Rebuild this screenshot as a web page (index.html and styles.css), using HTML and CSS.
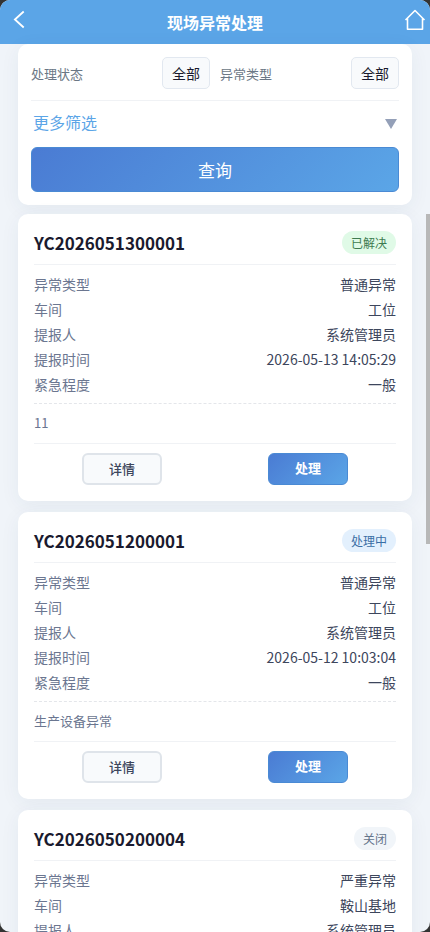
FILE: index.html
```html
<!DOCTYPE html>
<html lang="zh-CN">
<head>
<meta charset="utf-8">
<meta name="viewport" content="width=device-width, initial-scale=1">
<title>现场异常处理</title>
<link rel="stylesheet" href="styles.css">
</head>
<body>
<div class="app">
  <header class="navbar">
    <button class="nav-btn" type="button" aria-label="返回">
      <svg width="24" height="24" viewBox="0 0 24 24" fill="none" stroke="#fff" stroke-width="1.800"><path d="M16.700 3.500L7.900 11.500L16.700 19.500"/></svg>
    </button>
    <h1 class="navbar-title">现场异常处理</h1>
    <a class="nav-btn nav-home" href="#" aria-label="首页">
      <svg width="24" height="24" viewBox="0 0 24 24" fill="none" stroke="#fff" stroke-width="1.600" stroke-linejoin="round"><path d="M2.500 12L12 2.500L21.500 12M4.500 10.200V21.300H19.500V10.200"/></svg>
    </a>
  </header>

  <form class="filter">
    <div class="filter-row">
      <div class="field">
        <label for="status">处理状态</label>
        <select id="status"><option>全部</option></select>
      </div>
      <div class="field">
        <label for="type">异常类型</label>
        <select id="type"><option>全部</option></select>
      </div>
    </div>
    <button class="more" type="button">
      <span>更多筛选</span>
      <svg width="12" height="10" viewBox="0 0 12 10"><path d="M0 0H12L6 10Z" fill="#94a0b8"/></svg>
    </button>
    <button class="search" type="button">查询</button>
  </form>

  <main class="list">
    <div class="thumb"></div>
    <article class="card">
      <header class="card-head">
        <h2>YC2026051300001</h2>
        <span class="badge badge-done">已解决</span>
      </header>
      <dl class="info">
        <div><dt>异常类型</dt><dd>普通异常</dd></div>
        <div><dt>车间</dt><dd>工位</dd></div>
        <div><dt>提报人</dt><dd>系统管理员</dd></div>
        <div><dt>提报时间</dt><dd>2026-05-13 14:05:29</dd></div>
        <div><dt>紧急程度</dt><dd>一般</dd></div>
      </dl>
      <p class="desc">11</p>
      <footer class="actions">
        <button class="btn btn-plain" type="button">详情</button>
        <button class="btn btn-primary" type="button">处理</button>
      </footer>
    </article>

    <article class="card">
      <header class="card-head">
        <h2>YC2026051200001</h2>
        <span class="badge badge-doing">处理中</span>
      </header>
      <dl class="info">
        <div><dt>异常类型</dt><dd>普通异常</dd></div>
        <div><dt>车间</dt><dd>工位</dd></div>
        <div><dt>提报人</dt><dd>系统管理员</dd></div>
        <div><dt>提报时间</dt><dd>2026-05-12 10:03:04</dd></div>
        <div><dt>紧急程度</dt><dd>一般</dd></div>
      </dl>
      <p class="desc">生产设备异常</p>
      <footer class="actions">
        <button class="btn btn-plain" type="button">详情</button>
        <button class="btn btn-primary" type="button">处理</button>
      </footer>
    </article>

    <article class="card">
      <header class="card-head">
        <h2>YC2026050200004</h2>
        <span class="badge badge-closed">关闭</span>
      </header>
      <dl class="info">
        <div><dt>异常类型</dt><dd>严重异常</dd></div>
        <div><dt>车间</dt><dd>鞍山基地</dd></div>
        <div><dt>提报人</dt><dd>系统管理员</dd></div>
      </dl>
    </article>
  </main>
</div>
</body>
</html>
```
FILE: styles.css
```css
* {
  box-sizing: border-box;
}

body {
  margin: 0;
  background: #333;
  font-family: "Noto Sans CJK SC", "Noto Sans", sans-serif;
  color: #1a1a2e;
}

button,
select {
  margin: 0;
  font-family: inherit;
}

h1,
h2,
p,
dl,
dd {
  margin: 0;
}

.app {
  display: flex;
  flex-direction: column;
  height: 100vh;
  overflow: hidden;
  border-radius: 10px;
  background: #f0f4f9;
}

.navbar {
  display: grid;
  grid-template-columns: 1fr auto 1fr;
  flex: none;
  align-items: center;
  height: 44px;
  padding: 0 3px 4px;
  background: #5ba5e7;
}

.nav-btn {
  display: flex;
  justify-self: start;
  padding: 0 0 0 4px;
  border: 0;
  background: none;
}

.nav-home {
  justify-self: end;
}

.navbar-title {
  padding-top: 4px;
  font-size: 16px;
  line-height: 24px;
  font-weight: 700;
  color: #fff;
}

.filter {
  flex: none;
  margin: 0 18px;
  padding: 13px;
  border-radius: 10px;
  background: #fff;
  box-shadow: 0 4px 20px rgba(30, 60, 100, 0.06);
}

.filter-row {
  display: grid;
  grid-template-columns: 1fr 1fr;
  gap: 10px;
  padding-bottom: 11px;
  border-bottom: 1px solid #f0f2f5;
}

.field {
  display: flex;
  align-items: center;
  justify-content: space-between;
}

.field label {
  font-size: 13px;
  color: #6b7785;
}

.field select {
  appearance: none;
  width: 48px;
  height: 32px;
  padding: 0 8px;
  border: 1px solid #e2e8f0;
  border-radius: 5px;
  background: #f8fafc;
  font-size: 14px;
  text-align: center;
  color: #1a1a2e;
}

.more {
  display: flex;
  align-items: center;
  justify-content: space-between;
  width: 100%;
  height: 46px;
  padding: 0 2px;
  border: 0;
  background: none;
  font-size: 16px;
  color: #5ba5e7;
}

.more span {
  padding-bottom: 4px;
}

.search {
  display: block;
  width: 100%;
  height: 45px;
  border: 1px solid #4a8ad4;
  border-radius: 6px;
  background: linear-gradient(135deg, #4a7bd3, #5ba6e7) border-box;
  font-size: 17px;
  color: #fff;
}

.list {
  position: relative;
  display: flex;
  flex: 1;
  flex-direction: column;
  gap: 11px;
  min-height: 0;
  padding: 9px 18px 0;
}

.thumb {
  position: absolute;
  top: 9px;
  right: 0;
  width: 4px;
  height: 330px;
  background: #b8b8b8;
}

.card {
  flex: none;
  padding: 16px;
  border-radius: 10px;
  background: #fff;
  box-shadow: 0 4px 20px rgba(30, 60, 100, 0.06);
}

.card-head {
  display: flex;
  align-items: center;
  justify-content: space-between;
  height: 35px;
  padding-bottom: 9px;
  border-bottom: 1px solid #f0f2f5;
}

.card-head h2 {
  padding-top: 1px;
  font-size: 17px;
  line-height: 26px;
  font-weight: 700;
}

.badge {
  padding: 0 9px;
  border-radius: 12px;
  font-size: 12px;
  line-height: 23px;
}

.badge-done {
  background: #e0fae7;
  color: #3e7a50;
}

.badge-doing {
  background: #e3f0fd;
  color: #3a6ea5;
}

.badge-closed {
  background: #f1f5f9;
  color: #64748b;
}

.info {
  padding: 7px 0 6px;
}

.info div {
  display: flex;
  justify-content: space-between;
  font-size: 14px;
  line-height: 25px;
}

.info dt {
  color: #6b7690;
}

.info dd {
  color: #3d465c;
}

.desc {
  padding-bottom: 2px;
  border-top: 1px dashed #e4e6ea;
  font-size: 13px;
  line-height: 37px;
  color: #6b7690;
}

.actions {
  display: grid;
  grid-template-columns: 1fr 1fr;
  gap: 10px;
  justify-items: center;
  padding-top: 9px;
  border-top: 1px solid #f0f2f5;
}

.btn {
  width: 80px;
  height: 32px;
  padding: 0 0 2px;
  border-radius: 6px;
  font-size: 13px;
  font-weight: 500;
}

.btn-plain {
  border: 2px solid #dfe4ea;
  background: #f8fafc;
  color: #3d465c;
}

.btn-primary {
  padding-bottom: 4px;
  border: 1px solid #4a8ad4;
  background: linear-gradient(135deg, #4a7bd3, #5ba6e7) border-box;
  font-weight: 700;
  color: #fff;
}
```
